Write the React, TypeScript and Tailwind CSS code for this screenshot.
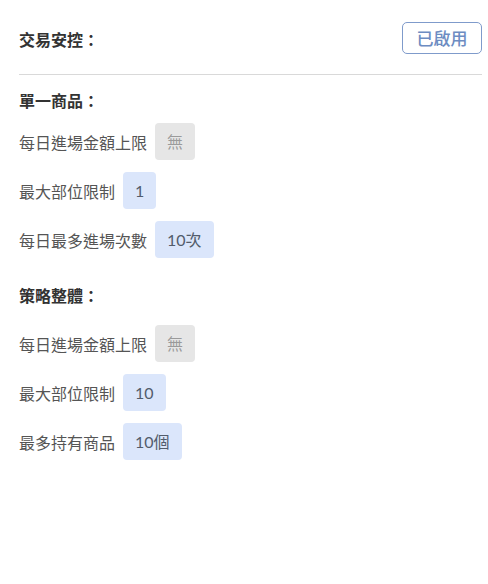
import React from "react";

const font = { fontFamily: '"Noto Sans CJK TC", "Noto Sans", sans-serif' };
const badgeFont = { fontFamily: 'Lato, "Noto Sans CJK TC", sans-serif' };

function Badge({ text, muted }: { text: string; muted?: boolean }) {
  return (
    <div
      style={badgeFont}
      className={
        "h-[37px] px-3 flex items-center rounded-[4px] text-[16px] " +
        (muted ? "bg-[#e6e6e6] text-[#9a9a9a]" : "bg-[#dbe6fb] text-[#525c6b]")
      }
    >
      {text}
    </div>
  );
}

function Row({ label, value, muted }: { label: string; value: string; muted?: boolean }) {
  return (
    <div className="flex items-center gap-2 h-[37px]">
      <span className="text-[16px] text-[#555555] leading-6">{label}</span>
      <Badge text={value} muted={muted} />
    </div>
  );
}

export default function App() {
  return (
    <div className="w-[488px] h-[584px] bg-white" style={font}>
      <div className="ml-[19px] w-[463px] pt-[22px]">
        <div className="flex items-center justify-between h-[32px]">
          <span className="text-[16px] font-bold text-[#333333] leading-6 mt-[2px]">交易安控：</span>
          <div className="h-[32px] w-[80px] flex items-center justify-center border border-[#7f9bcb] rounded-[5px] text-[17px] font-medium text-[#6d8cc2]">
            已啟用
          </div>
        </div>
        <div className="mt-[20px] h-px bg-[#d9d9d9]" />
        <div className="mt-[13px] text-[16px] font-bold text-[#333333] leading-6">單一商品：</div>
        <div className="mt-[11px] flex flex-col gap-3">
          <Row label="每日進場金額上限" value="無" muted />
          <Row label="最大部位限制" value="1" />
          <Row label="每日最多進場次數" value="10次" />
        </div>
        <div className="mt-[25px] text-[16px] font-bold text-[#333333] leading-6">策略整體：</div>
        <div className="mt-[18px] flex flex-col gap-3">
          <Row label="每日進場金額上限" value="無" muted />
          <Row label="最大部位限制" value="10" />
          <Row label="最多持有商品" value="10個" />
        </div>
      </div>
    </div>
  );
}
